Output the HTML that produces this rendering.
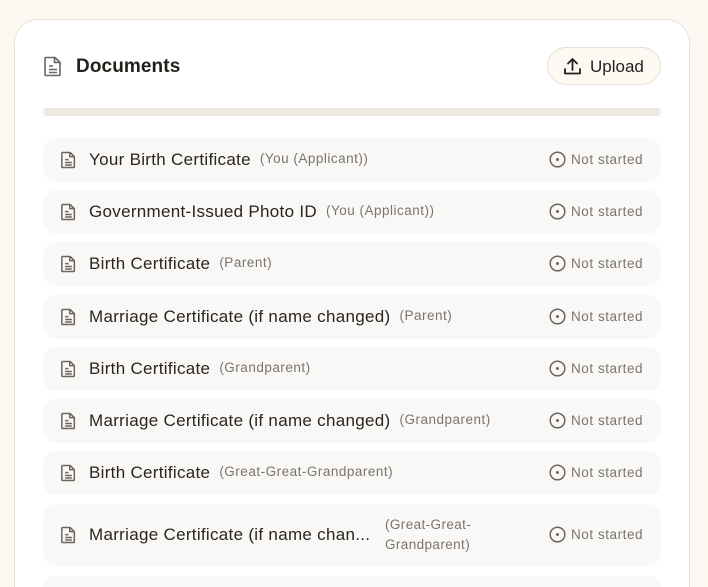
<!DOCTYPE html>
<html><head><meta charset="utf-8"><style>
*{box-sizing:border-box;margin:0;padding:0}
html,body{width:708px;height:587px;overflow:hidden}
body{background:#fdf9f2;font-family:"Liberation Sans",sans-serif;position:relative}
.card{position:absolute;left:14px;top:19px;width:676px;height:568px;background:#fff;border:1px solid #e6e2dc;border-bottom:none;border-radius:24px 24px 0 0}
.hicon{position:absolute;left:44px;top:56px}
.title{position:absolute;left:76px;top:56px;font-size:19px;font-weight:bold;color:#231f1b;letter-spacing:0.1px}
.up{position:absolute;left:547px;top:47px;width:114px;height:38px;border:1px solid #e6e0d7;background:#fdf9f2;border-radius:19px;font-size:17px;color:#231f1b}
.up svg{position:absolute;left:15px;top:9px}
.up span{position:absolute;left:42px;top:9px}
.bar{position:absolute;left:43px;top:108px;width:618px;height:8px;background:#efebe4;border-radius:4px}
.row{position:absolute;left:43px;width:618px;height:44px;background:#f9f8f6;border-radius:14px}
.row .ic{position:absolute;left:18px;top:13px}
.row .n{position:absolute;left:46px;top:12px;font-size:17px;letter-spacing:0.3px;color:#2a2520;white-space:nowrap}
.row .p{font-size:13.5px;letter-spacing:0.5px;color:#7a746e;margin-left:9px;vertical-align:2px}
.row .s{position:absolute;left:506px;top:13px;font-size:13.5px;letter-spacing:0.55px;color:#7a746e;white-space:nowrap}
.row .s svg{vertical-align:-4px;margin-right:5px}
</style></head><body>
<div class="card"></div>
<svg class="hicon" width="18" height="21" viewBox="0 0 18 21" fill="none" stroke="#6b655f" stroke-width="1.6" stroke-linejoin="round"><path d="M2 1.5h9l5 5v12a1 1 0 0 1-1 1H2a1 1 0 0 1-1-1v-16a1 1 0 0 1 1-1z"/><path d="M10.5 1.5v5h5.5M5 10h4M5 13.5h8M5 16.5h8"/></svg>
<div class="title">Documents</div>
<div class="up"><svg width="19" height="19" viewBox="0 0 19 19" fill="none" stroke="#231f1b" stroke-width="1.8" stroke-linecap="round" stroke-linejoin="round"><path d="M9.5 13V2M5 6.5l4.5-4.5 4.5 4.5M2 12v4.5h15V12"/></svg><span>Upload</span></div>
<div class="bar"></div>

<div class="row" style="top:138px"><svg class="ic" width="15" height="18" viewBox="0 0 18 21" fill="none" stroke="#6b655f" stroke-width="1.8" stroke-linejoin="round"><path d="M2 1.5h9l5 5v12a1 1 0 0 1-1 1H2a1 1 0 0 1-1-1v-16a1 1 0 0 1 1-1z"/><path d="M10.5 1.5v5h5.5M5 10h4M5 13.5h8M5 16.5h8"/></svg><div class="n">Your Birth Certificate<span class="p">(You (Applicant))</span></div><div class="s"><svg width="17" height="17" viewBox="0 0 17 17"><circle cx="8.5" cy="8.5" r="7.3" fill="none" stroke="#6b655f" stroke-width="1.5"/><circle cx="8.5" cy="8.5" r="1.5" fill="#6b655f"/></svg>Not started</div></div>

<div class="row" style="top:190px"><svg class="ic" width="15" height="18" viewBox="0 0 18 21" fill="none" stroke="#6b655f" stroke-width="1.8" stroke-linejoin="round"><path d="M2 1.5h9l5 5v12a1 1 0 0 1-1 1H2a1 1 0 0 1-1-1v-16a1 1 0 0 1 1-1z"/><path d="M10.5 1.5v5h5.5M5 10h4M5 13.5h8M5 16.5h8"/></svg><div class="n">Government-Issued Photo ID<span class="p">(You (Applicant))</span></div><div class="s"><svg width="17" height="17" viewBox="0 0 17 17"><circle cx="8.5" cy="8.5" r="7.3" fill="none" stroke="#6b655f" stroke-width="1.5"/><circle cx="8.5" cy="8.5" r="1.5" fill="#6b655f"/></svg>Not started</div></div>

<div class="row" style="top:242px"><svg class="ic" width="15" height="18" viewBox="0 0 18 21" fill="none" stroke="#6b655f" stroke-width="1.8" stroke-linejoin="round"><path d="M2 1.5h9l5 5v12a1 1 0 0 1-1 1H2a1 1 0 0 1-1-1v-16a1 1 0 0 1 1-1z"/><path d="M10.5 1.5v5h5.5M5 10h4M5 13.5h8M5 16.5h8"/></svg><div class="n">Birth Certificate<span class="p">(Parent)</span></div><div class="s"><svg width="17" height="17" viewBox="0 0 17 17"><circle cx="8.5" cy="8.5" r="7.3" fill="none" stroke="#6b655f" stroke-width="1.5"/><circle cx="8.5" cy="8.5" r="1.5" fill="#6b655f"/></svg>Not started</div></div>

<div class="row" style="top:295px"><svg class="ic" width="15" height="18" viewBox="0 0 18 21" fill="none" stroke="#6b655f" stroke-width="1.8" stroke-linejoin="round"><path d="M2 1.5h9l5 5v12a1 1 0 0 1-1 1H2a1 1 0 0 1-1-1v-16a1 1 0 0 1 1-1z"/><path d="M10.5 1.5v5h5.5M5 10h4M5 13.5h8M5 16.5h8"/></svg><div class="n">Marriage Certificate (if name changed)<span class="p">(Parent)</span></div><div class="s"><svg width="17" height="17" viewBox="0 0 17 17"><circle cx="8.5" cy="8.5" r="7.3" fill="none" stroke="#6b655f" stroke-width="1.5"/><circle cx="8.5" cy="8.5" r="1.5" fill="#6b655f"/></svg>Not started</div></div>

<div class="row" style="top:347px"><svg class="ic" width="15" height="18" viewBox="0 0 18 21" fill="none" stroke="#6b655f" stroke-width="1.8" stroke-linejoin="round"><path d="M2 1.5h9l5 5v12a1 1 0 0 1-1 1H2a1 1 0 0 1-1-1v-16a1 1 0 0 1 1-1z"/><path d="M10.5 1.5v5h5.5M5 10h4M5 13.5h8M5 16.5h8"/></svg><div class="n">Birth Certificate<span class="p">(Grandparent)</span></div><div class="s"><svg width="17" height="17" viewBox="0 0 17 17"><circle cx="8.5" cy="8.5" r="7.3" fill="none" stroke="#6b655f" stroke-width="1.5"/><circle cx="8.5" cy="8.5" r="1.5" fill="#6b655f"/></svg>Not started</div></div>

<div class="row" style="top:399px"><svg class="ic" width="15" height="18" viewBox="0 0 18 21" fill="none" stroke="#6b655f" stroke-width="1.8" stroke-linejoin="round"><path d="M2 1.5h9l5 5v12a1 1 0 0 1-1 1H2a1 1 0 0 1-1-1v-16a1 1 0 0 1 1-1z"/><path d="M10.5 1.5v5h5.5M5 10h4M5 13.5h8M5 16.5h8"/></svg><div class="n">Marriage Certificate (if name changed)<span class="p">(Grandparent)</span></div><div class="s"><svg width="17" height="17" viewBox="0 0 17 17"><circle cx="8.5" cy="8.5" r="7.3" fill="none" stroke="#6b655f" stroke-width="1.5"/><circle cx="8.5" cy="8.5" r="1.5" fill="#6b655f"/></svg>Not started</div></div>

<div class="row" style="top:451px"><svg class="ic" width="15" height="18" viewBox="0 0 18 21" fill="none" stroke="#6b655f" stroke-width="1.8" stroke-linejoin="round"><path d="M2 1.5h9l5 5v12a1 1 0 0 1-1 1H2a1 1 0 0 1-1-1v-16a1 1 0 0 1 1-1z"/><path d="M10.5 1.5v5h5.5M5 10h4M5 13.5h8M5 16.5h8"/></svg><div class="n">Birth Certificate<span class="p">(Great-Great-Grandparent)</span></div><div class="s"><svg width="17" height="17" viewBox="0 0 17 17"><circle cx="8.5" cy="8.5" r="7.3" fill="none" stroke="#6b655f" stroke-width="1.5"/><circle cx="8.5" cy="8.5" r="1.5" fill="#6b655f"/></svg>Not started</div></div>

<div class="row" style="top:504px;height:62px"><svg class="ic" style="top:22px" width="15" height="18" viewBox="0 0 18 21" fill="none" stroke="#6b655f" stroke-width="1.8" stroke-linejoin="round"><path d="M2 1.5h9l5 5v12a1 1 0 0 1-1 1H2a1 1 0 0 1-1-1v-16a1 1 0 0 1 1-1z"/><path d="M10.5 1.5v5h5.5M5 10h4M5 13.5h8M5 16.5h8"/></svg><div class="n" style="top:21px">Marriage Certificate (if name chan...</div><div style="position:absolute;left:342px;top:11px;font-size:13.5px;letter-spacing:0.4px;line-height:20px;color:#7a746e">(Great-Great-<br>Grandparent)</div><div class="s" style="top:22px"><svg width="17" height="17" viewBox="0 0 17 17"><circle cx="8.5" cy="8.5" r="7.3" fill="none" stroke="#6b655f" stroke-width="1.5"/><circle cx="8.5" cy="8.5" r="1.5" fill="#6b655f"/></svg>Not started</div></div>

<div class="row" style="top:576px;height:11px;border-radius:14px 14px 0 0"></div>
</body></html>
